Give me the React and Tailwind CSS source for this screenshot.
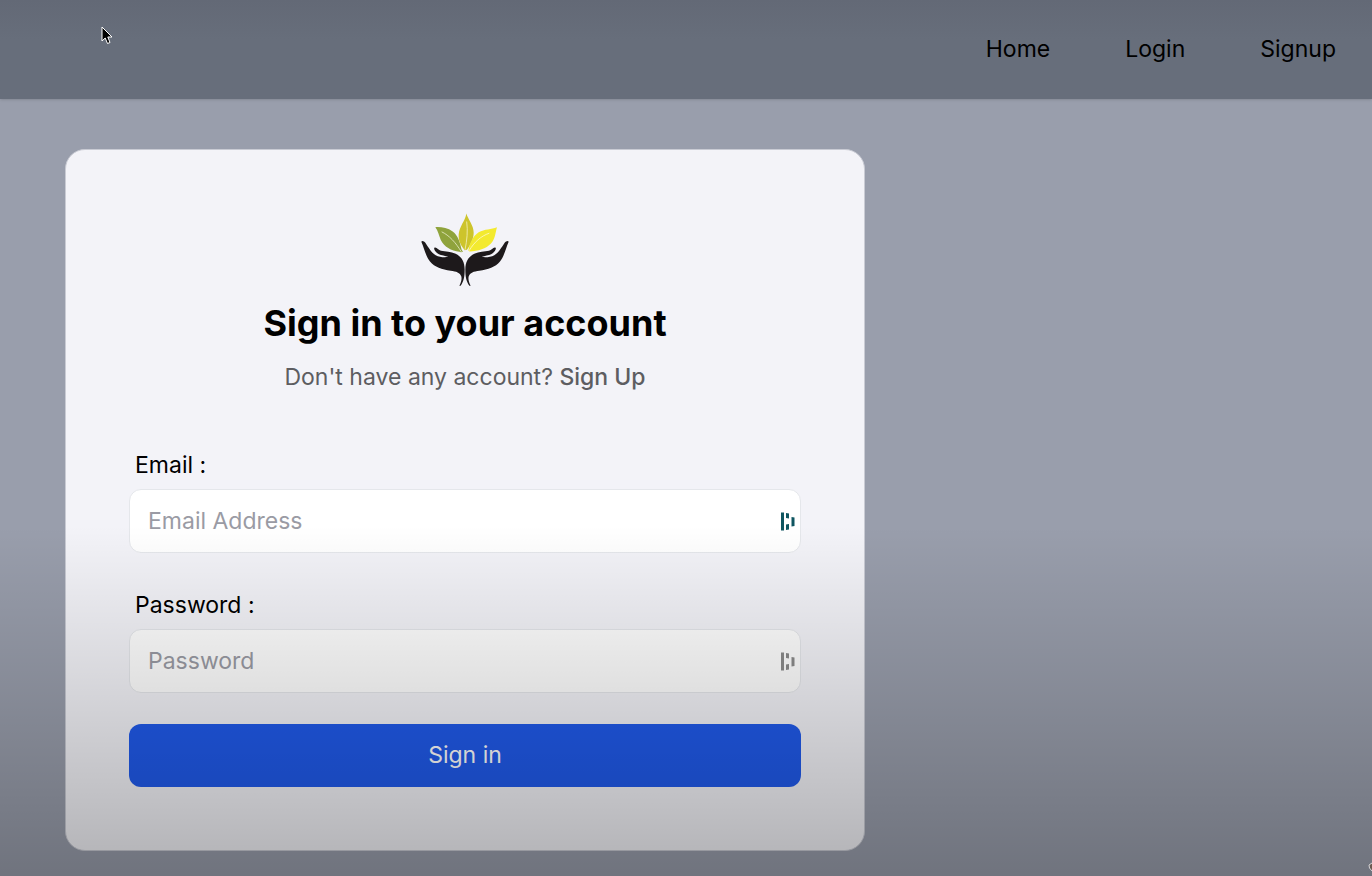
import React, { useState } from 'react';

const navItems = [
  { name: 'Home', url: '#home' },
  { name: 'Login', url: '#login' },
  { name: 'Signup', url: '#signup' },
];

const handPath =
  'M36 123C38 118 44 121 48 126C57 139 65 155 79 163C91 169 106 171 117 168C106 165 92 163 84 157C76 151 72 143 76 140C82 138 87 147 95 150C108 153 125 152 139 159C158 168 166 184 166 206C166 226 164 240 154 255L150 255C155 245 158 236 156 227C152 216 141 212 124 210C98 206 76 199 62 182C49 166 45 143 36 123Z';

const Logo = () => (
  <svg viewBox="35 37 264 221" className="w-[88px] h-[74px]" role="img" aria-label="Logo">
    <path
      fill="#8fa33c"
      d="M78 79C94 78 114 80 130 92C146 104 152 124 157 147L161 153L155 154L150 153C126 150 104 139 94 117C89 103 86 90 78 79Z"
    />
    <path fill="none" stroke="#e6ebc4" strokeWidth="2.5" d="M97 93C119 103 140 126 156 153" />
    <path
      fill="#cdc42c"
      d="M171 38C176 55 193 74 193 95C193 117 183 132 173 147L166 148C154 133 147 120 148 101C150 76 168 60 171 38Z"
    />
    <path fill="none" stroke="#f3efb8" strokeWidth="2.5" d="M172 62C176 91 173 118 167 147" />
    <path
      fill="#f3ea2f"
      d="M263 79C258 95 258 114 245 128C230 144 207 151 181 152L177 150C181 127 190 106 208 94C226 84 246 86 263 79Z"
    />
    <path fill="none" stroke="#fbf8c8" strokeWidth="2.5" d="M240 97C214 106 195 124 179 150" />
    <path fill="#1d191b" d={handPath} />
    <path fill="#1d191b" d={handPath} transform="translate(334 0) scale(-1 1)" />
  </svg>
);

const FillIcon = ({ className }) => (
  <svg viewBox="0 0 14 19" fill="currentColor" className={className} aria-hidden="true">
    <path d="M0 0.500H3V18.500H0ZM5 1L8 1.500V6.500L5 6ZM5 12.500L8 12V17.500L5 18ZM10.500 5L13.500 5.500V14L10.500 14.500Z" />
  </svg>
);

const Input = ({ label, id, iconClass, ...props }) => (
  <div className="w-full">
    <label htmlFor={id} className="block pl-1.5 mb-2 leading-8 text-black">
      {label}
    </label>
    <div className="relative">
      <input
        id={id}
        className="block w-full h-16 pl-[18px] pr-10 rounded-xl border border-gray-200 bg-white text-black placeholder:text-[#9a9ba4] outline-none"
        {...props}
      />
      <FillIcon className={`absolute right-1.5 top-[23px] w-3.5 h-[19px] ${iconClass}`} />
    </div>
  </div>
);

const Header = () => (
  <header className="bg-linear-to-b from-[#636976] to-[#676e7b] to-40% shadow-sm">
    <nav className="flex justify-end h-[99px] pr-9">
      <ul className="flex items-center gap-[75px]">
        {navItems.map((item) => (
          <li key={item.name}>
            <a href={item.url} className="text-black">
              {item.name}
            </a>
          </li>
        ))}
      </ul>
    </nav>
  </header>
);

const Login = () => {
  const [email, setEmail] = useState('');
  const [password, setPassword] = useState('');

  const handleSubmit = (e) => {
    e.preventDefault();
  };

  return (
    <div className="w-full max-w-[800px] rounded-[20px] border border-[#c9cbd4] bg-[#f3f3f8] p-[63px]">
      <div className="flex justify-center">
        <Logo />
      </div>
      <h2 className="mt-3 text-center text-4xl leading-12 font-bold text-black">
        Sign in to your account
      </h2>
      <p className="mt-3.5 text-center leading-8 text-[#5d5d61]">
        Don't have any account?{' '}
        <a href="#signup" className="font-medium">
          Sign Up
        </a>
      </p>
      <form onSubmit={handleSubmit} className="mt-14">
        <div className="space-y-9">
          <Input
            label="Email :"
            id="email"
            type="email"
            placeholder="Email Address"
            iconClass="text-[#0e5560]"
            value={email}
            onChange={(e) => setEmail(e.target.value)}
          />
          <Input
            label="Password :"
            id="password"
            type="password"
            placeholder="Password"
            iconClass="text-[#8b8b8b]"
            value={password}
            onChange={(e) => setPassword(e.target.value)}
          />
        </div>
        <button type="submit" className="mt-[31px] w-full h-[63px] rounded-xl bg-[#205aeb] text-white">
          Sign in
        </button>
      </form>
    </div>
  );
};

export default function App() {
  return (
    <div className="relative min-h-screen overflow-hidden bg-[#999eac] font-['Inter',sans-serif] text-[23px]">
      <Header />
      <main className="px-[65px] pt-[50px] pb-6">
        <Login />
      </main>

      {/* bottom shade */}
      <div className="absolute inset-0 pointer-events-none bg-linear-to-b from-transparent from-60% via-black/13 via-80% to-black/27" />

      {/* pointer */}
      <svg viewBox="0 0 12 19" className="absolute left-[101px] top-[26px] w-3 h-[19px]" aria-hidden="true">
        <path
          d="M1 1V15L4.200 12L6.500 17.500L9 16.500L6.800 11H11Z"
          fill="#000"
          stroke="#fff"
          strokeWidth="1"
        />
      </svg>
      <svg viewBox="0 0 4 10" className="absolute right-0 bottom-1 w-1 h-2.5" aria-hidden="true">
        <path d="M4 1L1 3L1.500 6L4 9" fill="#6b5a52" stroke="#d5d5d8" strokeWidth="1" />
      </svg>
    </div>
  );
}
